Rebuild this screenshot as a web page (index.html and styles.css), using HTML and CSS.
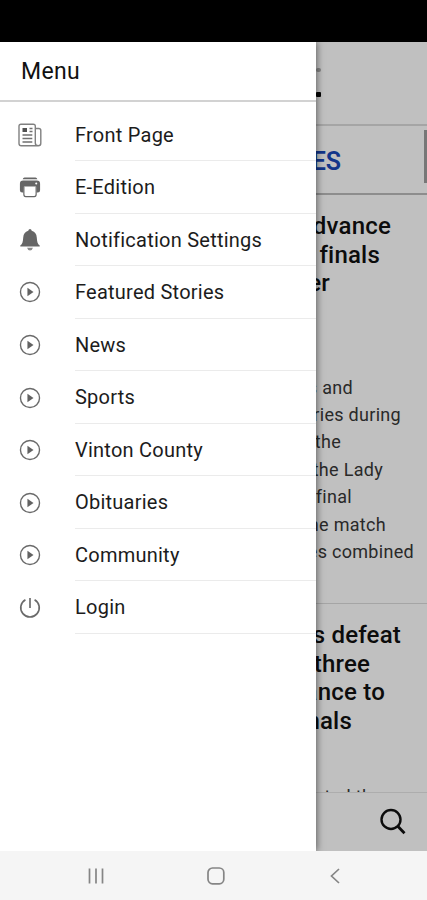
FILE: index.html
```html
<!DOCTYPE html>
<html lang="en">
<head>
<meta charset="utf-8">
<title>Menu</title>
<link rel="stylesheet" href="styles.css">
</head>
<body>
<svg class="defs" width="0" height="0">
  <symbol id="play" viewBox="0 0 24 24"><circle cx="12" cy="12" r="10.4" fill="none" stroke="#6a6a6a" stroke-width="1.5"/><path d="M9.200 7.400v9.200l6.600-4.600z" fill="#626262"/></symbol>
</svg>
<div class="phone">
  <div class="status"></div>
  <div class="stage">
    <main class="page">
      <header class="masthead"><i class="tick"></i><i class="dot"></i></header>
      <div class="tab"><span>TIMES</span><i class="thumb"></i></div>
      <article class="story first">
        <h2><span>advance</span><span>finals</span><span>er</span></h2>
        <p><span>s and</span><span>ries during</span><span>the</span><span>the Lady</span><span>final</span><span>the match</span><span>es combined</span></p>
      </article>
      <article class="story second">
        <h2><span>s defeat</span><span>three</span><span>advance to</span><span>finals</span></h2>
        <p><span>started the</span></p>
      </article>
      <footer class="toolbar"><svg width="30" height="30" viewBox="0 0 30 30" fill="none" stroke="#0c0c0c"><circle cx="12" cy="12.500" r="9.500" stroke-width="2.400"/><path d="M18.800 19.300l6.700 7" stroke-width="2.800"/></svg></footer>
    </main>
    <aside class="drawer">
      <h1>Menu</h1>
      <ul>
        <li><svg class="wide" viewBox="0 0 24 24" fill="none" stroke="#808080" stroke-width="1.400"><path d="M17.300 20V3.200q0-2-2-2H3Q1 1.200 1 3.200V20.500q0 2.300 2.300 2.300h17q2.500 0 2.500-2.500V7.500q0-2-2-2h-3.500M17.300 20q0 2.800 2.800 2.800"/><path d="M4.500 12h9.800M4.500 15.500h9.800M4.500 19h9.800M11.500 5.500h3M11.500 8.500h3" stroke="#707070"/><path d="M4.500 5h4.500v4H4.500z" fill="#505050" stroke="none"/></svg><span>Front Page</span></li>
        <li><svg viewBox="0 0 24 24"><path d="M6 1.500h12q1.500 0 2 2h-16q.500-2 2-2zM4.500 5h15q3.500 0 3.500 3.500v7q0 2.500-2.500 2.500H19v-6H5v6H3.500Q1 18 1 15.500v-7Q1 5 4.500 5z" fill="#666"/><circle cx="18.800" cy="8.300" r="1.100" fill="#fff"/><path d="M5.300 11.500v8.500q0 2.500 2 2.500h9.400q2 0 2-2.500v-8.500" fill="#fff" stroke="#666" stroke-width="1.300"/></svg><span>E-Edition</span></li>
        <li><svg viewBox="0 0 24 24" fill="#666"><path d="M12 0q1.500 0 1.900 1.900c3.600 1 5.200 3.600 5.500 7.300.3 4.600.7 7 3.200 8.700v1.200H1.400v-1.200c2.500-1.700 2.900-4.100 3.200-8.700.3-3.700 1.900-6.300 5.500-7.300Q10.500 0 12 0z"/><path d="M8.800 20.500h6.400Q14.400 23.500 12 23.500t-3.200-3z" fill="#8a8a8a"/></svg><span>Notification Settings</span></li>
        <li><svg><use href="#play"/></svg><span>Featured Stories</span></li>
        <li><svg><use href="#play"/></svg><span>News</span></li>
        <li><svg><use href="#play"/></svg><span>Sports</span></li>
        <li><svg><use href="#play"/></svg><span>Vinton County</span></li>
        <li><svg><use href="#play"/></svg><span>Obituaries</span></li>
        <li><svg><use href="#play"/></svg><span>Community</span></li>
        <li><svg viewBox="0 0 24 24" fill="none" stroke="#6a6a6a" stroke-width="1.800"><path d="M12 1v11M7 2.900a10.100 10.100 0 1 0 10 0"/></svg><span>Login</span></li>
      </ul>
    </aside>
  </div>
  <nav class="keys">
    <svg viewBox="0 0 20 20"><path d="M3.500 2.500v15M10 2.500v15M16.500 2.500v15"/></svg>
    <svg viewBox="0 0 20 20"><rect x="2" y="2" width="15.800" height="15.800" rx="4.500"/></svg>
    <svg viewBox="0 0 20 20"><path d="M14 3L6.500 10l7.500 7"/></svg>
  </nav>
</div>
</body>
</html>
```
FILE: styles.css
```css
* { box-sizing: border-box; margin: 0; padding: 0; }
body { font-family: Roboto, sans-serif; color: #111; }
.defs { display: block; }
.phone { display: grid; grid-template-rows: 42px 809px 49px; width: 427px; height: 900px; overflow: hidden; }
.status { background: #000; }
.stage { position: relative; overflow: hidden; }
.page { display: flex; flex-direction: column; height: 100%; background: #c0c0c0; text-align: right; white-space: nowrap; }
.page span { display: block; }
.masthead { display: flex; flex-direction: column; align-items: flex-end; gap: 20px; height: 84px; border-bottom: 2px solid #a5a5a5; padding: 26px 106px 0 0; }
.tick { width: 5px; height: 4px; border-radius: 2px; background: #858585; }
.dot { width: 5px; height: 5px; border-radius: 1px; background: #050505; }
.tab { display: flex; justify-content: flex-end; height: 69px; border-bottom: 2px solid #8d8d8d; font-size: 25px; line-height: 71px; font-weight: 600; color: #12358a; }
.thumb { width: 3px; height: 53px; margin: 4px 0 0 83px; background: #777; }
.story h2 { font-size: 24px; line-height: 28.5px; font-weight: 500; letter-spacing: .2px; color: #0c0c0c; }
.story p { font-size: 18px; line-height: 27.4px; letter-spacing: .3px; color: #292929; }
.first { height: 409px; padding-top: 17px; border-bottom: 1px solid #a5a5a5; }
.first h2 { margin-bottom: 76px; }
.first h2 span:nth-child(1) { margin-right: 36px; }
.first h2 span:nth-child(2) { margin-right: 47px; }
.first h2 span:nth-child(3) { margin-right: 97px; }
.first p span:nth-child(1) { margin-right: 74px; }
.first p span:nth-child(2) { margin-right: 26px; }
.first p span:nth-child(3) { margin-right: 86px; }
.first p span:nth-child(4) { margin-right: 44px; }
.first p span:nth-child(5) { margin-right: 75px; }
.first p span:nth-child(6) { margin-right: 41px; }
.first p span:nth-child(7) { margin-right: 13px; }
.second { flex: 1; min-height: 0; overflow: hidden; padding-top: 17px; }
.second h2 { margin-bottom: 48px; }
.second h2 span:nth-child(1) { margin-right: 26px; }
.second h2 span:nth-child(2) { margin-right: 57px; }
.second h2 span:nth-child(3) { margin-right: 42px; }
.second h2 span:nth-child(4) { margin-right: 75px; }
.second p { margin-right: 45px; }
.toolbar { display: flex; justify-content: flex-end; height: 59px; padding: 14px 18px 0 0; border-top: 1px solid #adadad; }
.drawer { position: absolute; top: 0; left: 0; width: 316px; height: 100%; background: #fff; box-shadow: 1px 0 7px rgba(0,0,0,.5); }
.drawer h1 { height: 60px; padding-left: 21px; border-bottom: 2px solid #d2d2d2; font-size: 23px; line-height: 60px; font-weight: 400; letter-spacing: .3px; }
.drawer ul { list-style: none; padding-top: 6.5px; }
.drawer li { display: flex; align-items: center; height: 52.55px; padding-left: 18.5px; }
.drawer li svg { flex: none; width: 22px; height: 22px; }
.drawer li .wide { width: 24px; height: 24px; margin: 0 -1px 0 -1px; }
.drawer li span { flex: 1; height: 100%; margin-left: 34.5px; border-bottom: 1.5px solid #ebebeb; font-size: 20px; line-height: 52px; letter-spacing: .24px; color: #1c1c1c; }
.keys { display: flex; align-items: center; justify-content: space-between; padding: 0 82px 0 86px; background: #f5f5f5; }
.keys svg { width: 20px; height: 20px; fill: none; stroke: #858585; stroke-width: 1.7; }
```
